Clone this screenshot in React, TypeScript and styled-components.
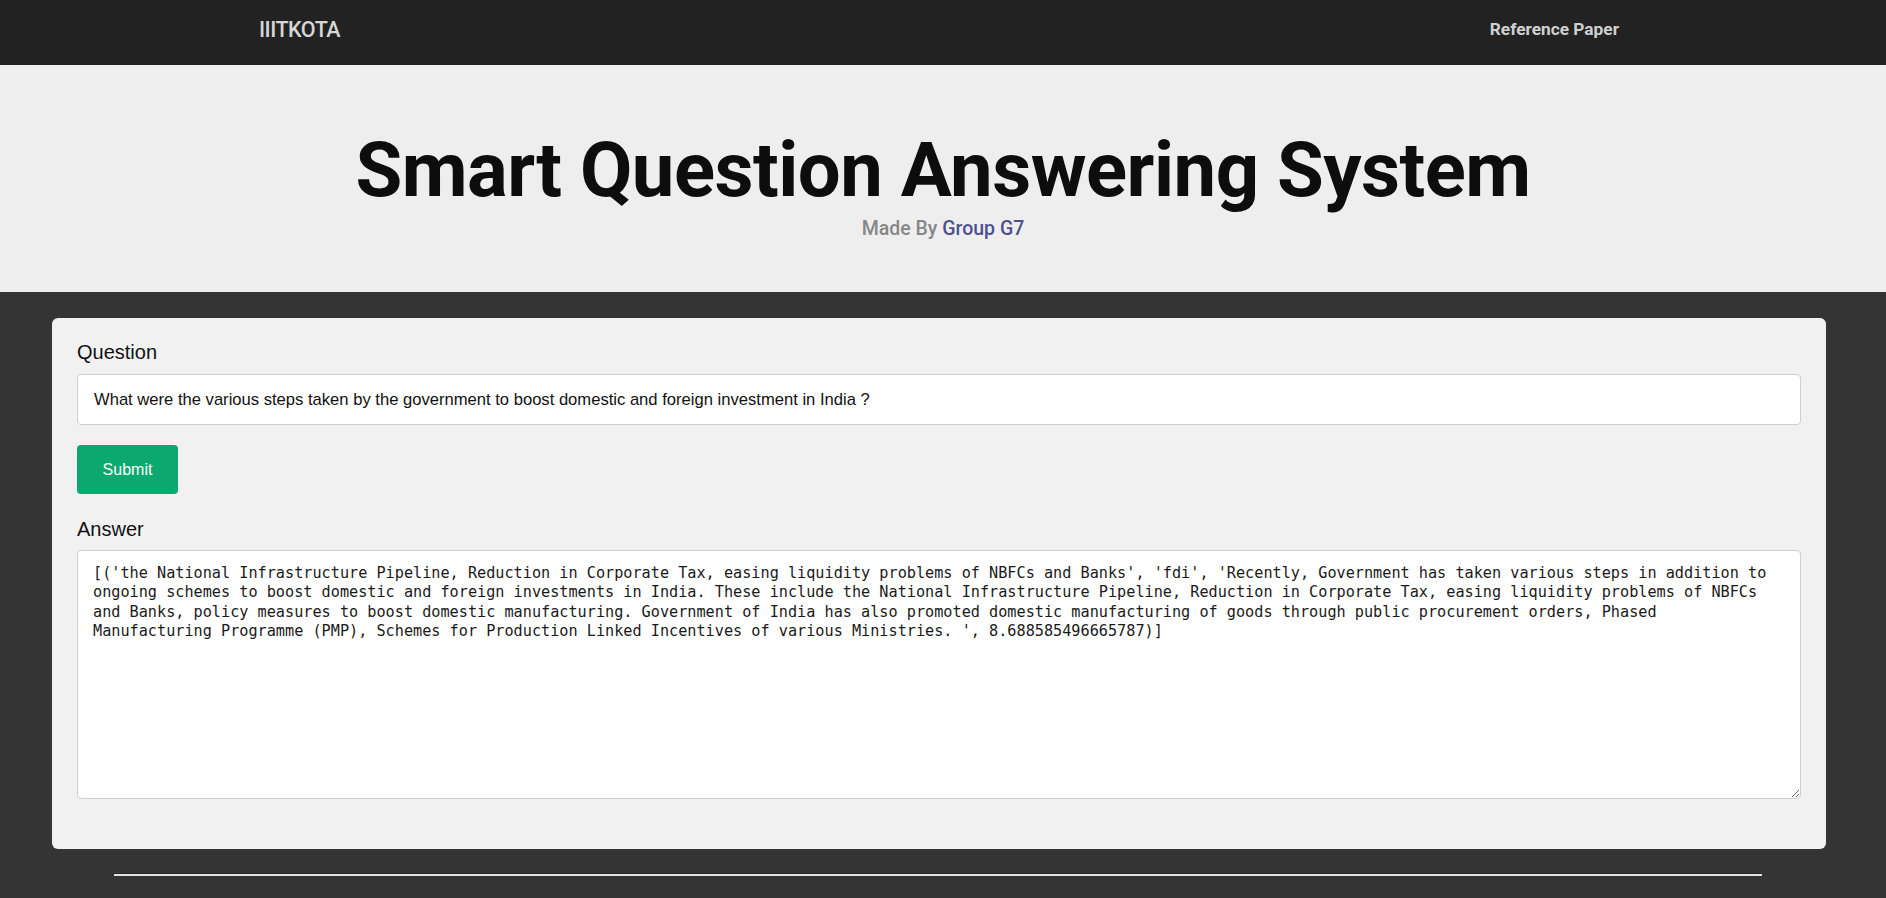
import React from 'react'
import styled, { createGlobalStyle } from 'styled-components'

const GlobalStyle = createGlobalStyle`
  html, body {
    margin: 0;
    padding: 0;
    background: #343434;
    font-family: 'Liberation Sans', Arial, sans-serif;
  }
`

const answerText =
  "[('the National Infrastructure Pipeline, Reduction in Corporate Tax, easing liquidity problems of NBFCs and Banks', 'fdi', 'Recently, Government has taken various steps in addition to ongoing schemes to boost domestic and foreign investments in India. These include the National Infrastructure Pipeline, Reduction in Corporate Tax, easing liquidity problems of NBFCs and Banks, policy measures to boost domestic manufacturing. Government of India has also promoted domestic manufacturing of goods through public procurement orders, Phased Manufacturing Programme (PMP), Schemes for Production Linked Incentives of various Ministries. ', 8.688585496665787)]"

const Navbar = styled.nav`
  height: 65px;
  background: #222222;
  display: flex;
  align-items: center;
  justify-content: space-between;
  padding: 0 267px 7px 259px;
  box-sizing: border-box;
`

const Brand = styled.a`
  color: #d6d6d6;
  font-family: Roboto, 'DejaVu Sans', sans-serif;
  font-weight: 500;
  font-size: 21.5px;
  letter-spacing: -0.5px;
  text-decoration: none;
`

const NavLink = styled.a`
  color: #d0d0d0;
  font-family: Roboto, 'DejaVu Sans', sans-serif;
  font-weight: 700;
  font-size: 17.3px;
  text-decoration: none;
`

const Hero = styled.header`
  background: #eeeeee;
  height: 227px;
  display: flex;
  flex-direction: column;
  align-items: center;
  box-sizing: border-box;
  padding-top: 67px;
`

const Title = styled.h1`
  margin: 0;
  font-family: Roboto, 'DejaVu Sans', sans-serif;
  font-weight: 700;
  font-size: 76px;
  line-height: 1;
  color: #0d0d0d;
  letter-spacing: -0.5px;
`

const Subtitle = styled.p`
  margin: 9px 0 0;
  font-family: Roboto, 'DejaVu Sans', sans-serif;
  font-weight: 500;
  font-size: 19.5px;
  color: #878787;
`

const Group = styled.span`
  color: #4f4f8e;
`

const Main = styled.main`
  padding: 26px 60px 0 52px;
`

const Card = styled.section`
  background: #f1f1f1;
  border-radius: 6px;
  padding: 22px 25px 50px;
`

const Label = styled.label<{ $gap?: number }>`
  display: block;
  font-size: 20px;
  line-height: 24px;
  color: #111;
  margin-bottom: ${({ $gap }) => $gap ?? 10}px;
`

const QuestionInput = styled.input`
  display: block;
  width: 100%;
  box-sizing: border-box;
  height: 51px;
  padding: 0 16px;
  border: 1px solid #cfcfcf;
  border-radius: 4px;
  background: #fff;
  font-family: 'Liberation Sans', Arial, sans-serif;
  font-size: 16.6px;
  color: #111;
  outline: none;
`

const SubmitButton = styled.button`
  display: block;
  margin: 20px 0 23px;
  width: 101px;
  height: 49px;
  border: none;
  border-radius: 4px;
  background: #0ba870;
  color: #fff;
  font-family: 'Liberation Sans', Arial, sans-serif;
  font-size: 16px;
  cursor: pointer;
`

const AnswerArea = styled.textarea`
  display: block;
  width: 100%;
  box-sizing: border-box;
  height: 249px;
  padding: 13px 24px 13px 15px;
  border: 1px solid #cfcfcf;
  border-radius: 4px;
  background: #fff;
  font-family: 'DejaVu Sans Mono', 'Liberation Mono', monospace;
  font-size: 15.2px;
  line-height: 19.25px;
  color: #1a1a1a;
  outline: none;
`

const Footer = styled.footer`
  padding: 24px 124px 40px 114px;
`

const Rule = styled.hr`
  margin: 0;
  border: none;
  border-top: 1px solid #2a2a2a;
  border-bottom: 2px solid #e2e2e2;
`

export default function App() {
  return (
    <>
      <GlobalStyle />
      <Navbar>
        <Brand href="#">IIITKOTA</Brand>
        <NavLink href="#">Reference Paper</NavLink>
      </Navbar>
      <Hero>
        <Title>Smart Question Answering System</Title>
        <Subtitle>
          Made By <Group>Group G7</Group>
        </Subtitle>
      </Hero>
      <Main>
        <Card>
          <Label htmlFor="question">Question</Label>
          <QuestionInput
            id="question"
            defaultValue="What were the various steps taken by the government to boost domestic and foreign investment in India ?"
          />
          <SubmitButton type="button">Submit</SubmitButton>
          <Label htmlFor="answer" $gap={9}>
            Answer
          </Label>
          <AnswerArea id="answer" defaultValue={answerText} />
        </Card>
      </Main>
      <Footer>
        <Rule />
      </Footer>
    </>
  )
}
